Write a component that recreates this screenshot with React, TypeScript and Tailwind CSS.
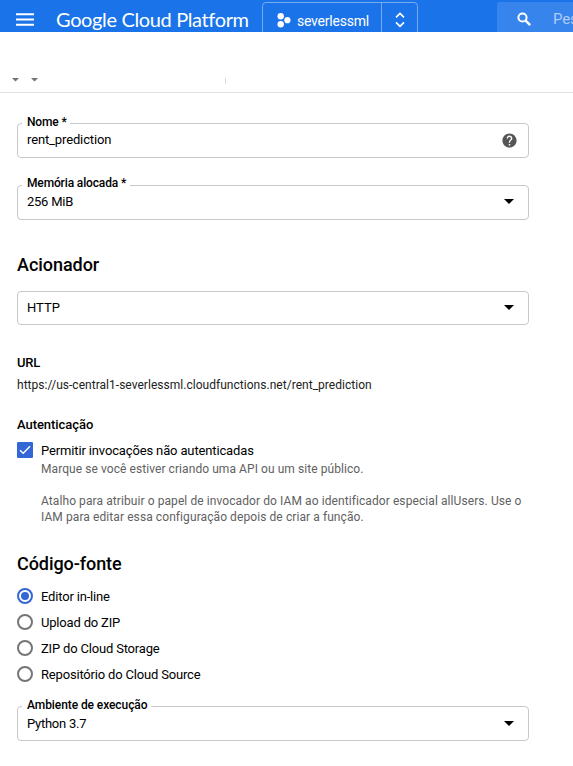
import React from "react";

function Caret({ className = "" }: { className?: string }) {
  return (
    <svg className={className} width="10" height="5" viewBox="0 0 10 5" fill="currentColor">
      <path d="M0 0h10L5 5z" />
    </svg>
  );
}

function HelpIcon() {
  return (
    <svg width="17" height="17" viewBox="0 0 24 24" fill="#565656">
      <path d="M12 2C6.48 2 2 6.48 2 12s4.48 10 10 10 10-4.48 10-10S17.52 2 12 2zm1 17h-2v-2h2v2zm2.07-7.75l-.9.92C13.45 12.9 13 13.5 13 15h-2v-.5c0-1.1.45-2.1 1.17-2.83l1.24-1.26c.37-.36.59-.86.59-1.41 0-1.1-.9-2-2-2s-2 .9-2 2H8c0-2.21 1.79-4 4-4s4 1.79 4 4c0 .88-.36 1.68-.93 2.25z" />
    </svg>
  );
}

type FieldProps = {
  label?: string;
  value: string;
  box: string;
  labelClass?: string;
  valueClass?: string;
  help?: boolean;
};

function Field({ label, value, box, labelClass = "", valueClass = "", help }: FieldProps) {
  return (
    <div
      className={`relative flex w-[512px] items-center justify-between rounded-[4px] border border-[#c8c8c8] pr-[14px] pl-[9px] ${box}`}
    >
      {label && (
        <span
          className={`absolute left-[4px] bg-white pl-[5px] text-[12px] leading-[16px] font-medium whitespace-nowrap ${labelClass}`}
        >
          {label}
        </span>
      )}
      <span className={`text-[13px] leading-[16px] ${valueClass}`}>{value}</span>
      {help ? (
        <span className="-mr-[4px]">
          <HelpIcon />
        </span>
      ) : (
        <Caret />
      )}
    </div>
  );
}

function Radio({ label, checked }: { label: string; checked?: boolean }) {
  return (
    <div className="flex h-[16px] items-center gap-[8px]">
      <span
        className={`flex size-[16px] items-center justify-center rounded-full border-2 ${checked ? "border-[#3367d6]" : "border-[#757575]"}`}
      >
        {checked && <span className="size-[8px] rounded-full bg-[#3367d6]" />}
      </span>
      <span className="pt-[2px] text-[13px] leading-[16px] tracking-[-0.18px]">{label}</span>
    </div>
  );
}

export default function App() {
  return (
    <div className="h-[766px] w-[573px] overflow-hidden bg-white font-['Roboto',sans-serif] text-black">
      <header className="flex h-[32px] overflow-hidden bg-[#1a73e8] text-white">
        <svg className="mt-[13px] ml-[16px] shrink-0" width="18" height="13" viewBox="0 0 18 13" fill="#fff">
          <path d="M0 .3h18v2H0zM0 5.5h18v2H0zM0 10.7h18v2H0z" />
        </svg>
        <div className="mt-[7px] ml-[22px] w-[206px] shrink-0 font-['Lato',sans-serif] text-[20px] leading-[24px] tracking-[-0.36px] whitespace-nowrap">
          Google Cloud Platform
        </div>
        <div className="mt-[2px] flex h-[36px] w-[156px] shrink-0 rounded-[4px] border border-[#76abf1]">
          <div className="flex w-[119px] border-r border-[#76abf1]">
            <svg className="mt-[10px] ml-[14px] shrink-0" width="14" height="15" viewBox="0 0 14 15" fill="#fff">
              <circle cx="3.7" cy="3.3" r="3.2" />
              <circle cx="3.7" cy="11.2" r="3.2" />
              <circle cx="10.4" cy="7.2" r="3.1" />
            </svg>
            <span className="mt-[10px] ml-[6px] text-[14px] leading-[16px] tracking-[-0.22px]">severlessml</span>
          </div>
          <svg className="mt-[9px] ml-[13px]" width="10" height="16" viewBox="0 0 10 16" fill="none" stroke="#fff" strokeWidth="1.6">
            <path d="M1 5.4L5 1.4L9 5.4M1 10.4L5 14.4L9 10.4" />
          </svg>
        </div>
        <div className="mt-[2px] ml-[79px] flex h-[36px] w-[76px] shrink-0 rounded-tl-[2px] bg-[#3684ec]">
          <svg className="mt-[10px] ml-[20px] shrink-0" width="15" height="15" viewBox="0 0 15 15" fill="none" stroke="#fff">
            <circle cx="5.5" cy="5.5" r="4.1" strokeWidth="2" />
            <path d="M8.6 8.6L13.2 13.2" strokeWidth="2.4" />
          </svg>
          <span className="mt-[9px] ml-[21px] text-[15px] leading-[16px] tracking-[-0.2px] text-[#aecbfa]">Pes</span>
        </div>
      </header>

      <div className="flex h-[61px] items-start border-b border-[#e0e0e0] pt-[46px] pl-[12px] text-[#757575]">
        <svg width="26" height="4" viewBox="0 0 26 4" fill="currentColor">
          <path d="M0 0h7L3.5 3.5zM19 0h7l-3.5 3.5z" />
        </svg>
        <span className="ml-[187px] h-[6px] w-px bg-[#dadada]" />
      </div>

      <main className="flex flex-col items-start pt-[30px] pl-[17px]">
        <Field
          label="Nome *"
          value="rent_prediction"
          box="h-[35px] pb-[1px]"
          labelClass="-top-[10px] w-[48px] tracking-[-0.15px]"
          valueClass="tracking-[-0.13px]"
          help
        />
        <div className="h-[27px]" />
        <Field
          label="Memória alocada *"
          value="256 MiB"
          box="h-[35px] pb-[2px]"
          labelClass="-top-[11px] w-[108px] tracking-[-0.14px]"
          valueClass="tracking-[-0.25px]"
        />

        <h2 className="mt-[33px] text-[18px] leading-[24px] font-medium tracking-[-0.05px]">Acionador</h2>
        <div className="h-[14px]" />
        <Field value="HTTP" box="h-[34px] pb-[1px]" />

        <h3 className="mt-[30px] text-[13px] leading-[16px] font-medium tracking-[-0.2px]">URL</h3>
        <p className="mt-[6px] text-[12px] leading-[16px] tracking-[0.03px] text-[#212121]">
          https://us-central1-severlessml.cloudfunctions.net/rent_prediction
        </p>

        <h3 className="mt-[24px] text-[13px] leading-[16px] font-medium tracking-[-0.06px]">Autenticação</h3>
        <div className="mt-[9px] flex gap-[8px]">
          <span className="flex size-[16px] shrink-0 items-center justify-center rounded-[1px] bg-[#3367d6]">
            <svg width="12" height="10" viewBox="0 0 12 10" fill="none" stroke="#fff" strokeWidth="1.4">
              <path d="M1 5.2L4.2 8.3L11 1.3" />
            </svg>
          </span>
          <div>
            <p className="h-[19px] text-[13px] leading-[17px] tracking-[-0.14px]">Permitir invocações não autenticadas</p>
            <p className="text-[12px] leading-[16px] tracking-[0.07px] text-[#616161]">
              Marque se você estiver criando uma API ou um site público.
            </p>
            <p className="mt-[16px] text-[12px] leading-[16px] tracking-[0.085px] whitespace-nowrap text-[#616161]">
              Atalho para atribuir o papel de invocador do IAM ao identificador especial allUsers. Use o
              <br />
              IAM para editar essa configuração depois de criar a função.
            </p>
          </div>
        </div>

        <h2 className="mt-[27px] text-[18px] leading-[24px] font-medium tracking-[-0.07px]">Código-fonte</h2>
        <div className="mt-[12px] flex flex-col gap-[10px]">
          <Radio label="Editor in-line" checked />
          <Radio label="Upload do ZIP" />
          <Radio label="ZIP do Cloud Storage" />
          <Radio label="Repositório do Cloud Source" />
        </div>
        <div className="h-[24px]" />
        <Field
          label="Ambiente de execução"
          value="Python 3.7"
          box="h-[35px]"
          labelClass="-top-[10px] w-[129px] tracking-[-0.08px]"
          valueClass="tracking-[-0.25px]"
        />
      </main>
    </div>
  );
}
